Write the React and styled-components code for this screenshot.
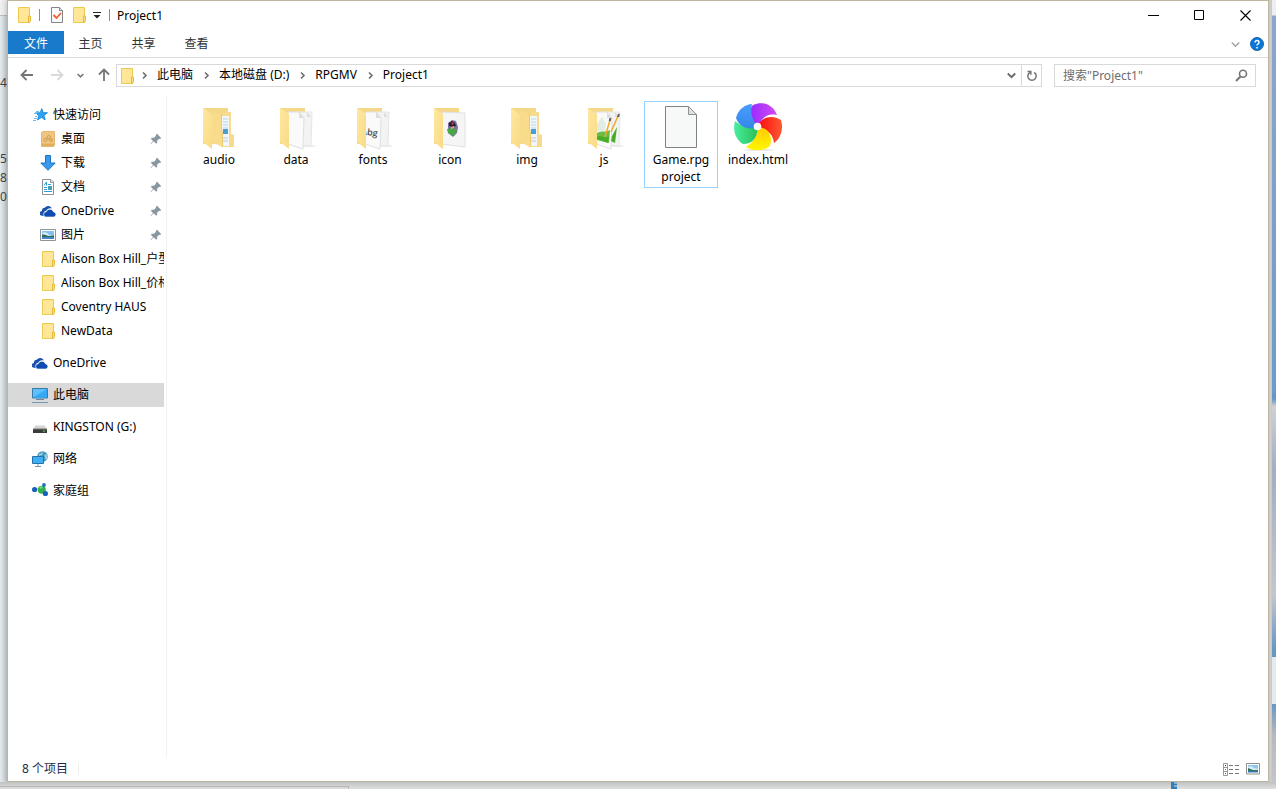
import React from 'react';
import styled, { createGlobalStyle, css } from 'styled-components';

const quickAccess = [
  { name: '桌面', icon: 'desktop', pinned: true },
  { name: '下载', icon: 'download', pinned: true },
  { name: '文档', icon: 'document', pinned: true },
  { name: 'OneDrive', icon: 'cloud', pinned: true },
  { name: '图片', icon: 'picture', pinned: true },
  { name: 'Alison Box Hill_户型', icon: 'folder' },
  { name: 'Alison Box Hill_价格', icon: 'folder' },
  { name: 'Coventry HAUS', icon: 'folder' },
  { name: 'NewData', icon: 'folder' },
];

const places = [
  { name: 'OneDrive', icon: 'cloud' },
  { name: '此电脑', icon: 'computer', active: true },
  { name: 'KINGSTON (G:)', icon: 'drive' },
  { name: '网络', icon: 'network' },
  { name: '家庭组', icon: 'homegroup' },
];

const files = [
  { name: 'audio', kind: 'nested' },
  { name: 'data', kind: 'papers' },
  { name: 'fonts', kind: 'fonts' },
  { name: 'icon', kind: 'image' },
  { name: 'img', kind: 'nested' },
  { name: 'js', kind: 'scripts' },
  { name: 'Game.rpgproject', lines: ['Game.rpg', 'project'], kind: 'file', selected: true },
  { name: 'index.html', kind: 'html' },
];

const crumbs = ['此电脑', '本地磁盘 (D:)', 'RPGMV', 'Project1'];

/* ---------- small icons, 16px ---------- */

function FolderIcon() {
  return (
    <svg width="16" height="16" viewBox="0 0 16 16" aria-hidden="true">
      <path d="M2.5.5h11v15h-11z" fill="#ffe797" stroke="#ecc94f" />
      <path d="M12.5 15.5V9.2h2v4.6l-1.2 1.7z" fill="#ffe28a" stroke="#e3b935" />
    </svg>
  );
}

function StarIcon() {
  return (
    <svg width="16" height="16" viewBox="0 0 16 16" aria-hidden="true">
      <path d="M9.800 1.600l1.400 4 4.300.1-3.400 2.700 1.100 4.500-3.800-2.500-3.900 2.600 1.300-4.500-3.400-2.600 4.700-.2z" fill="#2fa4f2" stroke="#1583d2" strokeWidth=".8" />
      <path d="M4 4.500h3M2 6.500h3M3 9.500h2M2 11.500h3M1 13.500h3" stroke="#6cbcf2" />
    </svg>
  );
}

function DesktopIcon() {
  return (
    <svg width="16" height="16" viewBox="0 0 16 16" aria-hidden="true">
      <path d="M1.500 1.500L3 .5h11.500v14l-1 1h-12z" fill="#efc581" stroke="#e5b871" />
      <path d="M1.500 12.500h12.500v2.500H1.500z" fill="#e3ae5c" />
      <circle cx="5.500" cy="8.800" r="1.700" fill="none" stroke="#cf9c50" />
      <circle cx="8.800" cy="6.300" r="1.700" fill="none" stroke="#cf9c50" />
      <circle cx="11" cy="9" r="1.400" fill="none" stroke="#cf9c50" />
    </svg>
  );
}

function DownloadIcon() {
  return (
    <svg width="16" height="16" viewBox="0 0 16 16" aria-hidden="true">
      <path d="M5.500.5h5v7.500h4.700L8 15.300.8 8h4.700z" fill="#3898ec" stroke="#1d76c4" />
    </svg>
  );
}

function DocumentIcon() {
  return (
    <svg width="16" height="16" viewBox="0 0 16 16" aria-hidden="true">
      <path d="M2.500.5h8.500l2.500 2.500v12.500h-11z" fill="#fff" stroke="#8a9299" />
      <path d="M10.500.5v3h3" fill="#e8edf0" stroke="#8a9299" />
      <path d="M4 6.500L6.500 3v3.500M8 5.500h3M4 8.500h3M4 10.500h3M4 12.500h8" fill="none" stroke="#2f9bd6" />
      <path d="M8 7h4v4H8z" fill="#4a9cb5" />
    </svg>
  );
}

function CloudIcon() {
  return (
    <svg width="16" height="16" viewBox="0 0 16 16" aria-hidden="true">
      <path d="M4.600 12.800H2.400A2.300 2.300 0 0 1 2 8a3 3 0 0 1 2.700-3.200A4.300 4.300 0 0 1 12 5.400c-3-.7-4.900.3-5.600 2.300-1.900.3-3 1.600-2.800 3.400z" fill="#1a52ad" />
      <path d="M6.300 14A2.600 2.600 0 0 1 6.200 8.800 3.900 3.900 0 0 1 13.600 8.900 2.600 2.600 0 0 1 14 14z" fill="#0d4bb2" stroke="#fff" strokeWidth=".6" />
    </svg>
  );
}

function PictureIcon() {
  return (
    <svg width="16" height="16" viewBox="0 0 16 16" aria-hidden="true">
      <path d="M.5 2.500h15v11H.5z" fill="#fff" stroke="#8c959c" />
      <path d="M2 4h12v8H2z" fill="#86bff0" />
      <path d="M2 7l2-2 3 1 2 2 5 1v3H2z" fill="#d9effa" />
      <path d="M2 7.500c3-.5 5 1 7 1.500l5-.5V10H2z" fill="#2b6a5c" />
      <path d="M2 10h12v2H2z" fill="#4686c4" />
    </svg>
  );
}

function ComputerIcon() {
  return (
    <svg width="16" height="16" viewBox="0 0 16 16" aria-hidden="true">
      <path d="M.5 1.500h15v9.500H.5z" fill="#5bc0fb" stroke="#367aa5" />
      <path d="M1 10.500L15 2v8.500z" fill="#34a8f5" />
      <path d="M4 12.500h8" stroke="#6b8aa2" />
      <path d="M0 15.500h16" stroke="#7596ae" />
    </svg>
  );
}

function DriveIcon() {
  return (
    <svg width="16" height="16" viewBox="0 0 16 16" aria-hidden="true">
      <path d="M3 6.500h10l1.500 4H1.500z" fill="#d5d5d5" />
      <path d="M1 10h14v4H1z" fill="#3b3b3b" />
      <path d="M1 10h14" stroke="#777" />
      <path d="M11 11.500h2v1h-2z" fill="#4fe36b" />
    </svg>
  );
}

function NetworkIcon() {
  return (
    <svg width="16" height="16" viewBox="0 0 16 16" aria-hidden="true">
      <circle cx="10.500" cy="5.500" r="5.300" fill="#4798bc" />
      <path d="M7 3c2 0 2-1.500 4-2l-1 3-3 1zm5.500 1l2-1c1.500 2 1 5-1 6z" fill="#a3d0e0" />
      <path d="M.5 5.500h11v7H.5z" fill="#3eaff5" stroke="#2372a8" />
      <path d="M6 13v2M3 15.500h6" stroke="#7896aa" />
    </svg>
  );
}

function HomegroupIcon() {
  return (
    <svg width="16" height="16" viewBox="0 0 16 16" aria-hidden="true">
      <path d="M3 6h7l3-4M10 7l4 4" stroke="#b7c7ce" fill="none" />
      <circle cx="2.600" cy="6.500" r="2.600" fill="#1762b8" />
      <circle cx="9.800" cy="6.800" r="4" fill="#31b04b" />
      <path d="M7 5c1-2 3-2 4-1L9 6z" fill="#7cd684" />
      <circle cx="12" cy="2" r="1.900" fill="#1e72b8" />
      <circle cx="13.400" cy="10.500" r="2.600" fill="#1762b8" />
    </svg>
  );
}

function CheckIcon() {
  return (
    <svg width="16" height="16" viewBox="0 0 16 16" aria-hidden="true">
      <path d="M2.500.5h8l3 3v12h-11z" fill="#f9f9f9" stroke="#848484" />
      <path d="M10.500.5v3h3" fill="#ddd" stroke="#848484" />
      <path d="M4.500 8l3 3L12 6" fill="none" stroke="#ee6132" strokeWidth="1.800" />
    </svg>
  );
}

function PinIcon() {
  return (
    <svg width="12" height="12" viewBox="0 0 12 12" aria-hidden="true">
      <path d="M7 .8L11.200 5l-1.100 1-1-.3-2 2 .1 2-1 1-2.500-2.500L.7 11.300.4 11 3 8 .8 5.700l1-1 2.200.1 2-2-.2-1z" fill="#8997a1" />
    </svg>
  );
}

function Chevron({ dir = 'down', size = 9, color = '#6d6d6d', weight = 2 }) {
  return (
    <svg width={size} height={size} viewBox="0 0 9 9" aria-hidden="true">
      <path d={dir === 'down' ? 'M.8 2.500l3.700 3.700 3.700-3.700' : 'M3 1.500l3 3-3 3'} fill="none" stroke={color} strokeWidth={weight} />
    </svg>
  );
}

function Arrow({ dir, color }) {
  const turn = { left: 0, right: 180, up: 90 }[dir];
  return (
    <svg width="14" height="14" viewBox="0 0 14 14" aria-hidden="true">
      <path d="M13 7H1.800M6.500 2L1.500 7l5 5" transform={`rotate(${turn} 7 7)`} fill="none" stroke={color} strokeWidth="1.800" />
    </svg>
  );
}

const icons = {
  folder: FolderIcon,
  desktop: DesktopIcon,
  download: DownloadIcon,
  document: DocumentIcon,
  cloud: CloudIcon,
  picture: PictureIcon,
  computer: ComputerIcon,
  drive: DriveIcon,
  network: NetworkIcon,
  homegroup: HomegroupIcon,
};

/* ---------- large icons, 48px ---------- */

function FolderBack({ children }) {
  return (
    <svg width="48" height="48" viewBox="0 0 48 48" aria-hidden="true">
      <defs>
        <linearGradient id="flap" x1="0" y1="0" x2="1" y2="1">
          <stop offset="0" stopColor="#ffe7a2" />
          <stop offset="1" stopColor="#fadb83" />
        </linearGradient>
      </defs>
      <path d="M8 5h25v36H8z" fill="#f4d888" />
      {children}
      <path d="M8 5l9 6v35L8 39z" fill="url(#flap)" />
    </svg>
  );
}

function Papers() {
  return (
    <g>
      <path d="M24 44h19v-2H24z" fill="#eee" />
      <path d="M23 9h17l-1 34-16-1z" fill="#f3f3f4" stroke="#e6e6e6" />
      <path d="M16 9h11l5 6-1 31-15-5z" fill="#fafafa" stroke="#e0e0e0" />
      <path d="M27 9v6h5zM35 9v5h4z" fill="#dedede" />
    </g>
  );
}

function LargeIcon({ kind }) {
  if (kind === 'file') {
    return (
      <svg width="48" height="48" viewBox="0 0 48 48" aria-hidden="true">
        <path d="M8.500 3.500h23l8 8v33h-31z" fill="#f7f8f8" stroke="#7e8285" />
        <path d="M31.500 3.500v8h8z" fill="#dfe2e3" stroke="#8d9193" />
      </svg>
    );
  }
  if (kind === 'html') {
    return (
      <svg width="48" height="48" viewBox="0 0 48 48" aria-hidden="true">
        <defs>
          <linearGradient id="purple" x2="1"><stop stopColor="#9a2cff" /><stop offset="1" stopColor="#d04af2" /></linearGradient>
          <linearGradient id="blue" y2="1" x2="0"><stop stopColor="#4b9cff" /><stop offset="1" stopColor="#3388e6" /></linearGradient>
          <linearGradient id="green" x2="1"><stop stopColor="#48ed9e" /><stop offset="1" stopColor="#28bf55" /></linearGradient>
          <linearGradient id="yellow" y2="1" x2="0"><stop stopColor="#ffc900" /><stop offset="1" stopColor="#fff800" /></linearGradient>
          <linearGradient id="red" x2="1"><stop stopColor="#f90d0d" /><stop offset="1" stopColor="#ff5934" /></linearGradient>
        </defs>
        <ellipse cx="25" cy="47" rx="15" ry="1" fill="#e8e8e8" />
        <path d="M24 24C15 15 14 7 19 2 30-3 40 3 43 12 34 10 28 14 24 24z" fill="url(#purple)" />
        <path d="M24 24C26 14 38 11 47 17 50 27 46 36 40 40 39 32 35 27 24 24z" fill="url(#red)" />
        <path d="M24 24C35 25 39 33 36 43 29 49 18 48 12 44 20 39 23 33 24 24z" fill="url(#yellow)" />
        <path d="M24 24C23 36 18 41 9 41 0 35-1 26 1 18 8 24 15 26 24 24z" fill="url(#green)" />
        <path d="M24 24C15 28 5 24 2 15 4 6 12 1 18 1 16 10 18 17 24 24z" fill="url(#blue)" />
        <circle cx="23.500" cy="23.500" r="3.800" fill="#fff" />
      </svg>
    );
  }
  if (kind === 'nested') {
    return (
      <FolderBack>
        <path d="M28 9h8v22l3 1v12H28z" fill="#f6db8f" />
        <path d="M27 13h7v30h-7z" fill="#f3f6f8" />
        <path d="M28 16h5M28 19h5M28 22h5M28 25h5" stroke="#b5d6ea" />
        <path d="M28 26h5v5h-5z" fill="#4a9fd0" />
        <path d="M28 35h5M28 38h5" stroke="#c2c9cd" />
        <path d="M17 7l10 5v32l-10-5z" fill="#f8dc8c" />
        <path d="M26.500 12v15l1 3v14" fill="none" stroke="#ebca76" />
      </FolderBack>
    );
  }
  if (kind === 'image') {
    return (
      <FolderBack>
        <path d="M16 9l23 1v34l-23-3z" fill="#f5f5f6" stroke="#e1e1e1" />
        <path d="M22 20l4-3 4 1 2 6-1 6-4 4-5-4z" fill="#7b74a0" />
        <path d="M23 20l3-2 3 2 1 3-4 1-3-1z" fill="#242226" />
        <path d="M21 26l5-1 5 2-3 6-6-3z" fill="#48a842" />
        <path d="M25 24l3-1v2l-3 1z" fill="#ed987b" />
        <path d="M25 20l2-1 1 2-2 1z" fill="#c9334d" />
      </FolderBack>
    );
  }
  return (
    <FolderBack>
      <Papers />
      {kind === 'fonts' && (
        <text x="12" y="32" fontFamily="Open Sans, sans-serif" fontSize="9" fontWeight="600" fill="#4b4b4b" transform="rotate(8 18 30)">Abg</text>
      )}
      {kind === 'scripts' && (
        <g>
          <path d="M17 30c4-3 8 0 13-3l-1 13-12-3z" fill="#6cbb45" />
          <path d="M17 21l5-7 4 7-1 7h-8z" fill="#e2ede1" />
          <path d="M17 34c4-3 8 3 12-1l-1 7-11-4zM32 33l5-9-2 16-4-2z" fill="#47ad29" />
          <path d="M30 17l-5 17M38 13l-7 16" stroke="#f0aa2b" strokeWidth="1.500" />
          <path d="M30.500 15l-.8 3M39 11l-1 3" stroke="#675b57" strokeWidth="2" />
        </g>
      )}
    </FolderBack>
  );
}

/* ---------- page ---------- */

function SideLink({ item, nested }) {
  const Icon = icons[item.icon];
  return (
    <SideRow href="#" $nested={nested} $active={item.active}>
      <Icon />
      <SideName>{item.name}</SideName>
      {item.pinned && <PinIcon />}
    </SideRow>
  );
}

function App() {
  return (
    <Desktop>
      <GlobalStyle />
      <Middle>
        <LeftEdge>
          <EdgeText $gap={74}>4</EdgeText>
          <EdgeText $gap={57}>5</EdgeText>
          <EdgeText $gap={0}>8</EdgeText>
          <EdgeText $gap={0}>0</EdgeText>
        </LeftEdge>
        <Window>
          <TitleBar>
            <FolderIcon />
            <Divider />
            <QuickTools>
              <IconButton aria-label="属性"><CheckIcon /></IconButton>
              <IconButton aria-label="新建文件夹"><FolderIcon /></IconButton>
              <IconButton aria-label="自定义快速访问工具栏">
                <svg width="8" height="8" viewBox="0 0 8 8"><path d="M0 1.500h8" stroke="#222" /><path d="M.5 4h7L4 7.500z" fill="#222" /></svg>
              </IconButton>
            </QuickTools>
            <Divider />
            <Title>Project1</Title>
            <WindowButton aria-label="最小化">
              <svg width="11" height="11" viewBox="0 0 11 11"><path d="M0 5.500h11" stroke="#000" /></svg>
            </WindowButton>
            <WindowButton aria-label="最大化">
              <svg width="11" height="11" viewBox="0 0 11 11"><path d="M.5.5h9v9h-9z" fill="none" stroke="#000" /></svg>
            </WindowButton>
            <WindowButton aria-label="关闭">
              <svg width="11" height="11" viewBox="0 0 11 11"><path d="M.5.5l10 10M10.500.5l-10 10" stroke="#000" strokeWidth="1.100" /></svg>
            </WindowButton>
          </TitleBar>

          <Ribbon>
            <Tab $primary>文件</Tab>
            <Tab>主页</Tab>
            <Tab>共享</Tab>
            <Tab>查看</Tab>
            <RibbonTools>
              <IconButton aria-label="展开功能区"><Chevron color="#a5a5a5" weight={1.5} /></IconButton>
              <IconButton aria-label="帮助">
                <svg width="14" height="14" viewBox="0 0 14 14">
                  <circle cx="7" cy="7" r="6.500" fill="#0877d8" stroke="#2367a5" />
                  <path d="M5 5.500c0-2.700 4-2.500 4 0C9 7 7 7 7 8.500M7 10v1.500" fill="none" stroke="#fff" strokeWidth="1.500" />
                </svg>
              </IconButton>
            </RibbonTools>
          </Ribbon>

          <NavBar>
            <NavButtons>
              <IconButton aria-label="后退"><Arrow dir="left" color="#757575" /></IconButton>
              <IconButton aria-label="前进" disabled><Arrow dir="right" color="#d9d9d9" /></IconButton>
              <IconButton aria-label="最近位置"><Chevron size={7} color="#777" /></IconButton>
              <IconButton aria-label="上移"><Arrow dir="up" color="#757575" /></IconButton>
            </NavButtons>
            <AddressBox>
              <FolderIcon />
              {crumbs.map((crumb) => (
                <Crumb key={crumb}>
                  <Chevron dir="right" weight={1.6} />
                  <CrumbLink href="#">{crumb}</CrumbLink>
                </Crumb>
              ))}
              <AddressDrop aria-label="以前的位置"><Chevron /></AddressDrop>
              <RefreshButton aria-label="刷新">
                <svg width="12" height="12" viewBox="0 0 12 12"><path d="M8.200 2.500A4.200 4.200 0 1 1 4 2.400M1.500 1.500h3.300v3.300" fill="none" stroke="#757575" strokeWidth="1.500" /></svg>
              </RefreshButton>
            </AddressBox>
            <SearchBox>
              <SearchInput type="search" aria-label="搜索" placeholder={'搜索"Project1"'} />
              <svg width="13" height="13" viewBox="0 0 13 13" aria-hidden="true">
                <circle cx="8" cy="4.800" r="3.500" fill="none" stroke="#757575" strokeWidth="1.600" />
                <path d="M5.500 7.500L1 12" stroke="#757575" strokeWidth="2" />
              </svg>
            </SearchBox>
          </NavBar>

          <Body>
            <Sidebar>
              <SideRow href="#">
                <StarIcon />
                <SideName>快速访问</SideName>
              </SideRow>
              {quickAccess.map((item) => <SideLink key={item.name} item={item} nested />)}
              <PlaceList>
                {places.map((item) => <SideLink key={item.name} item={item} />)}
              </PlaceList>
            </Sidebar>
            <FileArea>
              {files.map((file) => (
                <FileTile key={file.name} $selected={file.selected}>
                  <LargeIcon kind={file.kind} />
                  {(file.lines || [file.name]).map((line) => <FileName key={line}>{line}</FileName>)}
                </FileTile>
              ))}
            </FileArea>
          </Body>

          <StatusBar>
            <StatusText>8 个项目</StatusText>
            <IconButton aria-label="详细信息">
              <svg width="16" height="13" viewBox="0 0 16 13">
                <path d="M.5.5h4v12h-4zM.5 4.500h4M.5 8.500h4" fill="none" stroke="#999" />
                <path d="M6 2.500h4M12 2.500h4M6 6.500h4M12 6.500h4M6 10.500h4M12 10.500h4" stroke="#777" />
                <path d="M2 2.500h1" stroke="#333" /><path d="M2 6.500h1" stroke="#3c83cf" /><path d="M2 10.500h1" stroke="#c22" />
              </svg>
            </IconButton>
            <IconButton aria-label="大图标">
              <svg width="14" height="12" viewBox="0 0 14 12">
                <path d="M.5.5h13v10.500H.5z" fill="#fff" stroke="#8e8e8e" />
                <path d="M2 2h10v7H2z" fill="#8fc5ef" />
                <path d="M2 4l3-1 3 2 4 1v2H2z" fill="#d9eef4" />
                <path d="M2 5l5 2h5v1H2z" fill="#2f735e" /><path d="M2 8h10v1.500H2z" fill="#3975b5" />
              </svg>
            </IconButton>
          </StatusBar>
        </Window>
        <RightEdge />
      </Middle>
      <BottomEdge>
        <BottomPanel />
        <svg width="6" height="7" viewBox="0 0 6 7" aria-hidden="true"><path d="M0 0h6v7H0z" fill="#337fb5" /><path d="M3 1h3M3 4h3" stroke="#cfe4f2" /></svg>
      </BottomEdge>
    </Desktop>
  );
}

const GlobalStyle = createGlobalStyle`
  * { box-sizing: border-box; }
  body {
    margin: 0;
    font-family: "Noto Sans", "Noto Sans CJK SC", sans-serif;
    font-size: 12px;
    line-height: 17px;
    color: #000;
  }
  button, input { font: inherit; color: inherit; }
  a { color: inherit; text-decoration: none; }
  svg { display: block; flex: none; }
`;

const Desktop = styled.div`
  min-height: 100vh;
  display: flex;
  flex-direction: column;
  background: #d2d5d6;
`;

const Middle = styled.div`
  flex: 1;
  display: flex;
`;

const LeftEdge = styled.div`
  width: 7px;
  overflow: hidden;
  background: linear-gradient(#f0f0f0 15px, #b9bdc0 15px, #b9bdc0 16px, transparent 16px), linear-gradient(90deg, #e4eaee, #cbd3d6);
`;

const EdgeText = styled.div`
  margin-top: ${({ $gap }) => $gap}px;
  padding-bottom: 2px;
  color: #444;
`;

const RightEdge = styled.div`
  width: 7px;
  border-left: 3px solid #c9cbcd;
  background: linear-gradient(#eee 15px, #8ea6cb 16px, #6d9bca 50%, #6495c5 51%, #d0d1d4 52%, #a2aec3 60%, #c5c6cc 76%, #6797c3 83%, #6797c3 84%, #e5eaee 84%, #e5eaee 90%, #6797c3 90%, #b7b9bd 94%, #c5c5c7);
`;

const BottomEdge = styled.div`
  height: 7px;
  display: flex;
  justify-content: space-between;
  padding-right: 99px;
  background: linear-gradient(#bfc2c2, #dfdfdf);
`;

const BottomPanel = styled.div`
  width: 349px;
  margin-top: 4px;
  border: solid #b8b8b8;
  border-width: 1px 1px 0 0;
`;

const Window = styled.main`
  flex: 1;
  min-width: 0;
  display: flex;
  flex-direction: column;
  background: #fff;
  border: 1px solid #bfb59f;
  box-shadow: 0 0 6px rgba(0, 0, 0, 0.3);
`;

const TitleBar = styled.header`
  height: 30px;
  display: flex;
  align-items: center;
  padding: 0 0 2px 8px;
`;

const Divider = styled.span`
  width: 1px;
  height: 12px;
  margin: 0 7px;
  background: #8f8f8f;
`;

const IconButton = styled.button`
  display: flex;
  align-items: center;
  justify-content: center;
  padding: 0;
  border: 0;
  background: none;
`;

const QuickTools = styled.div`
  display: flex;
  align-items: center;
  gap: 6px;
  padding: 0 1px 0 2px;
`;

const Title = styled.h1`
  flex: 1;
  margin: 0;
  font-size: 12px;
  font-weight: 400;
`;

const WindowButton = styled(IconButton)`
  width: 46px;
  height: 28px;
`;

const Ribbon = styled.nav`
  height: 27px;
  display: flex;
  align-items: flex-start;
  border-bottom: 1px solid #dadbdc;
`;

const Tab = styled.button`
  width: 53px;
  height: 23px;
  padding: 1px 0 0;
  border: 0;
  background: none;
  color: #333;
  ${({ $primary }) => $primary && css`
    width: 56px;
    background: #1979ca;
    color: #fff;
  `}
`;

const RibbonTools = styled.div`
  height: 26px;
  display: flex;
  align-items: center;
  gap: 10px;
  margin-left: auto;
  padding-right: 4px;
`;

const NavBar = styled.div`
  display: flex;
  align-items: center;
  padding: 6px 12px;
`;

const NavButtons = styled.div`
  width: 96px;
  display: flex;
  align-items: center;
  gap: 16px;
  padding-bottom: 1px;

  button:nth-child(3) {
    margin: 0 -3px;
  }
`;

const AddressBox = styled.div`
  flex: 1;
  min-width: 0;
  height: 23px;
  display: flex;
  align-items: center;
  padding-left: 2px;
  border: 1px solid #d9d9d9;
`;

const Crumb = styled.span`
  display: flex;
  align-items: center;
  gap: 8px;
  padding-left: 9px;
  white-space: nowrap;

  &:nth-of-type(1) {
    padding-left: 5px;
  }
`;

const CrumbLink = styled.a`
  padding-bottom: 2px;
`;

const AddressDrop = styled(IconButton)`
  width: 19px;
  height: 21px;
  margin-left: auto;
`;

const RefreshButton = styled(IconButton)`
  width: 20px;
  height: 21px;
  border-left: 1px solid #d9d9d9;
`;

const SearchBox = styled.label`
  width: 202px;
  height: 23px;
  display: flex;
  align-items: center;
  margin-left: 12px;
  padding: 0 7px 0 8px;
  border: 1px solid #d9d9d9;
`;

const SearchInput = styled.input`
  flex: 1;
  min-width: 0;
  padding: 0;
  border: 0;
  outline: 0;
  background: none;

  &::placeholder {
    color: #6d6d6d;
    opacity: 1;
  }
`;

const Body = styled.div`
  flex: 1;
  display: flex;
  padding-top: 3px;
`;

const Sidebar = styled.aside`
  width: 159px;
  padding: 7px 2px 0 0;
  border-right: 1px solid #f2f2f2;
`;

const SideRow = styled.a`
  height: 24px;
  display: flex;
  align-items: center;
  gap: 5px;
  padding-left: ${({ $nested }) => ($nested ? 32 : 24)}px;
  background: ${({ $active }) => ($active ? '#d9d9d9' : 'none')};

  svg:last-child {
    margin-right: 2px;
  }
`;

const SideName = styled.span`
  flex: 1;
  min-width: 0;
  padding-bottom: 2px;
  overflow: hidden;
  white-space: nowrap;
`;

const PlaceList = styled.div`
  display: grid;
  gap: 8px;
  padding-top: 8px;
`;

const FileArea = styled.section`
  flex: 1;
  display: flex;
  flex-wrap: wrap;
  align-content: flex-start;
  align-items: flex-start;
  gap: 3px;
  padding: 5px 15px;
`;

const FileTile = styled.button`
  width: 74px;
  display: flex;
  flex-direction: column;
  align-items: center;
  padding: 1px 0 2px;
  border: 1px solid ${({ $selected }) => ($selected ? '#99d1ff' : 'transparent')};
  background: none;
`;

const FileName = styled.span`
  line-height: 17px;
`;

const StatusBar = styled.footer`
  height: 24px;
  display: flex;
  align-items: center;
  gap: 7px;
  padding: 0 8px 0 14px;
`;

const StatusText = styled.span`
  margin-right: auto;
  padding-right: 10px;
  border-right: 1px solid #eee;
  color: #1e2b4d;
  line-height: 12px;
`;

export default App;
